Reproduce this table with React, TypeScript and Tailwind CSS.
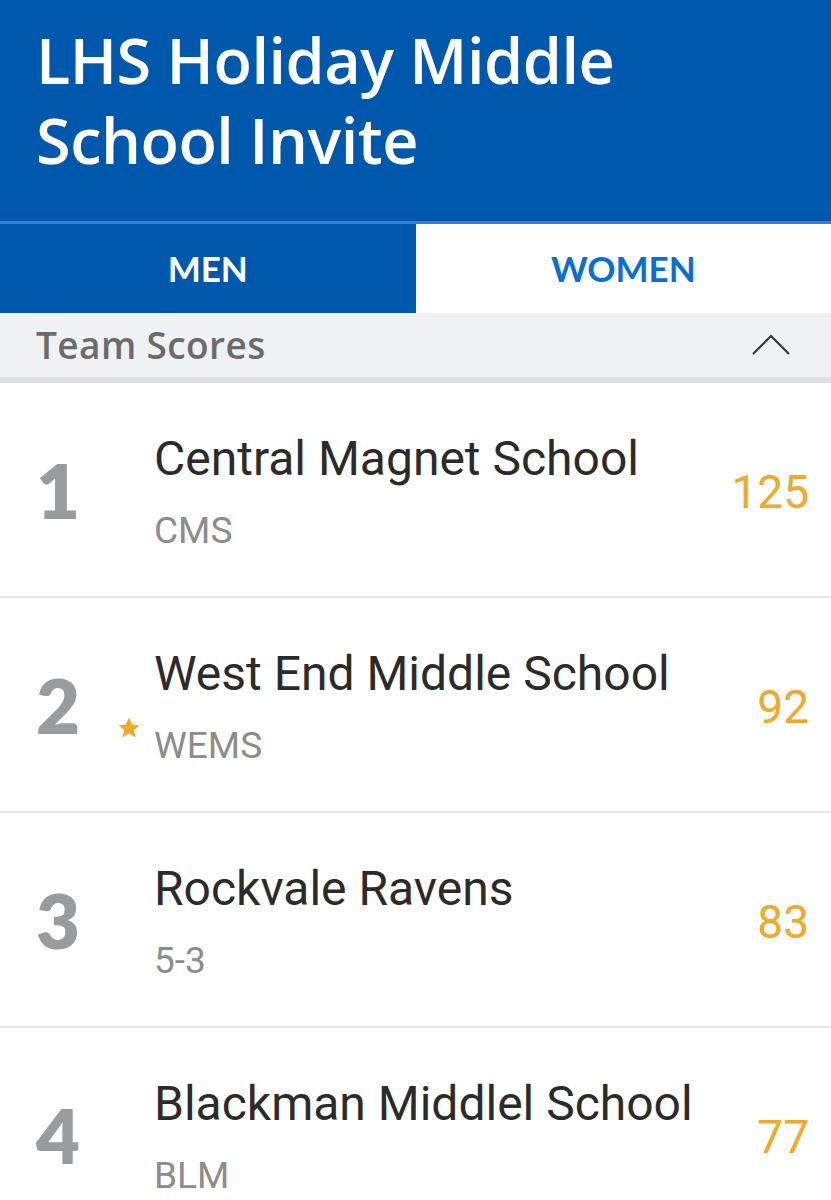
import React from "react";

const teams = [
  { rank: "1", name: "Central Magnet School", sub: "CMS", score: "125", star: false },
  { rank: "2", name: "West End Middle School", sub: "WEMS", score: "92", star: true },
  { rank: "3", name: "Rockvale Ravens", sub: "5-3", score: "83", star: false },
  { rank: "4", name: "Blackman Middlel School", sub: "BLM", score: "77", star: false },
];

function Star() {
  return (
    <svg width="24" height="24" viewBox="0 0 24 24" className="absolute left-[-37px] top-[-8px]">
      <path d="M12 1.5l3.1 7.1 7.4.6-5.6 4.9 1.7 7.4L12 17.6l-6.6 3.9 1.7-7.4L1.5 9.2l7.4-.6z" fill="#f0a92a" />
    </svg>
  );
}

export default function App() {
  return (
    <div className="w-[831px] bg-white font-['Roboto',sans-serif]">
      <header className="h-[224px] bg-[#0058ad] pl-9 pt-[20px] border-b-[3px] border-[#3d7fc6]">
        <h1 className="max-w-[660px] font-['Open_Sans',sans-serif] font-semibold text-white text-[63px] leading-[80px] tracking-[-0.5px]">
          LHS Holiday Middle School Invite
        </h1>
      </header>
      <div className="flex h-[89px]">
        <button type="button" className="w-1/2 bg-[#0058ad] text-white font-['Lato',sans-serif] font-bold text-[35px]">
          MEN
        </button>
        <button type="button" className="w-1/2 bg-white text-[#0a6fd4] font-['Lato',sans-serif] font-bold text-[35px]">
          WOMEN
        </button>
      </div>
      <div className="flex h-[70px] items-center justify-between bg-[#f0f1f3] pl-9 pr-10 border-b-[6px] border-[#dedfe1]">
        <span className="font-['Open_Sans',sans-serif] font-semibold text-[37px] text-[#6b6b6b] tracking-[0.4px]">Team Scores</span>
        <svg width="40" height="22" viewBox="0 0 40 22">
          <path d="M2 20L20 2l18 18" fill="none" stroke="#333" strokeWidth="2" />
        </svg>
      </div>
      {teams.map((t) => (
        <div key={t.rank} className="flex h-[215px] items-center border-b-2 border-[#e6e6e6] pl-9 pr-[22px]">
          <div className="w-[118px] font-['Lato',sans-serif] font-extrabold text-[76px] text-[#9a9b9d]">{t.rank}</div>
          <div className="flex-1 pt-1">
            <div className="text-[48px] text-[#2b2b2b] leading-[56px]">{t.name}</div>
            <div className="relative mt-[22px] text-[37px] text-[#8c8c8c] leading-[44px]">
              {t.star && <Star />}
              {t.sub}
            </div>
          </div>
          <div className="pt-[6px] text-[46px] text-[#f0a92a]">{t.score}</div>
        </div>
      ))}
    </div>
  );
}
